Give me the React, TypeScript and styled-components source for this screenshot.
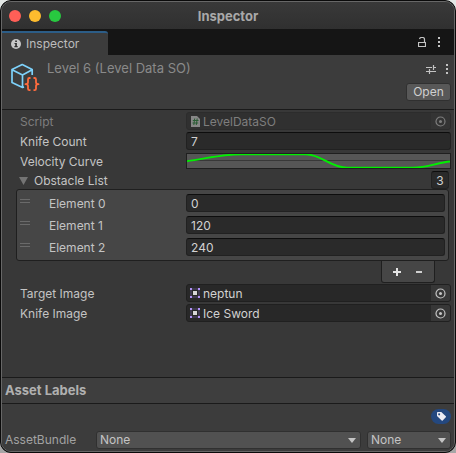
import React, { useId, useState } from "react";
import styled, { createGlobalStyle } from "styled-components";

const GlobalStyle = createGlobalStyle`
  * { box-sizing: border-box; }
  html { background: linear-gradient(#e4e8e6, #a6a6a6); }
  body { margin: 0; }
  body, button, input, select {
    font-family: Inter, "Liberation Sans", sans-serif;
    font-size: 12px;
    line-height: 16px;
    color: #c4c4c4;
  }
  button, input, select { margin: 0; padding: 0; border: 0; background: none; outline: none; }
  svg { display: block; flex: none; }
`;

const Window = styled.main`
  display: flex;
  flex-direction: column;
  min-height: 100vh;
  border: 1px solid #0a0a0a;
  border-radius: 11px;
  background: #0a0a0a;
`;

const Frame = styled.div`
  flex: 1;
  display: flex;
  flex-direction: column;
  border: 1px solid #676767;
  border-radius: 10px;
  background: #383838;
  overflow: hidden;
`;

const TitleBar = styled.header`
  display: grid;
  grid-template-columns: 1fr auto 1fr;
  align-items: center;
  height: 27px;
  padding: 0 7px;
  background: linear-gradient(#393939, #303030);
`;

const Lights = styled.div`
  display: flex;
  gap: 8px;
`;

const Light = styled.button<{ $color: string }>`
  width: 12px;
  height: 12px;
  border-radius: 50%;
  background: ${(p) => p.$color};
`;

const Title = styled.h1`
  margin: 0;
  font-size: 13px;
  font-weight: 700;
  line-height: 16px;
  color: #a9a9a9;
`;

const TabBar = styled.nav`
  display: flex;
  justify-content: space-between;
  align-items: flex-end;
  height: 26px;
  background: #151515;
`;

const Tab = styled.button`
  display: flex;
  align-items: center;
  gap: 5px;
  width: 106px;
  height: 24px;
  padding: 0 9px;
  border-top: 2px solid #2c5d87;
  border-top-right-radius: 3px;
  background: #3c3c3c;
  color: #bdbdbd;
`;

const Tools = styled.div`
  display: flex;
  align-items: center;
  gap: 10px;
`;

const TabTools = styled(Tools)`
  gap: 12px;
  height: 26px;
  padding-right: 14px;
`;

const IconButton = styled.button`
  display: flex;
  color: #c4c4c4;
`;

const AssetHeader = styled.section`
  display: flex;
  align-items: flex-start;
  height: 55px;
  padding: 5px 3px 0 9px;
  border-bottom: 1px solid #1a1a1a;
  background: #3c3c3c;
`;

const AssetTitle = styled.h2`
  flex: 1;
  margin: 0;
  padding-left: 6px;
  font-size: 13px;
  font-weight: 400;
  line-height: 16px;
  color: #8a8a8a;
`;

const HeaderSide = styled.div`
  display: flex;
  flex-direction: column;
  align-items: flex-end;
  gap: 6px;
`;

const HeaderTools = styled(Tools)`
  height: 17px;
  padding-right: 3px;
`;

const OpenButton = styled.button`
  width: 45px;
  height: 18px;
  border: 1px solid #303030;
  border-radius: 3px;
  background: #585858;
  color: #d0d0d0;
`;

const Body = styled.section`
  flex: 1;
  padding: 2px 3px 0 14px;
`;

const Row = styled.div<{ $muted?: boolean }>`
  display: grid;
  grid-template-columns: 166px 1fr;
  align-items: center;
  min-height: 18px;
  margin-bottom: 2px;
  padding-left: 4px;
  color: ${(p) => (p.$muted ? "#7e7e7e" : "#c4c4c4")};
`;

const Label = styled.label`
  padding-top: 2px;
`;

const TextField = styled.input`
  width: 100%;
  height: 18px;
  padding: 0 4px;
  border: 1px solid #212121;
  border-top-color: #0d0d0d;
  border-radius: 3px;
  background: #2a2a2a;
  color: #d2d2d2;
`;

const ObjectBox = styled.div<{ $muted?: boolean }>`
  display: flex;
  align-items: stretch;
  height: 18px;
  border: 1px solid ${(p) => (p.$muted ? "#2c2c2c" : "#202020")};
  border-radius: 3px;
  background: ${(p) => (p.$muted ? "#303030" : "#282828")};
  color: ${(p) => (p.$muted ? "#7e7e7e" : "#d2d2d2")};
  overflow: hidden;
`;

const ObjectValue = styled.div`
  flex: 1;
  display: flex;
  align-items: center;
  gap: 2px;
  padding-left: 3px;
`;

const ObjectName = styled.span`
  padding-top: 2px;
`;

const Picker = styled.button`
  display: flex;
  align-items: center;
  justify-content: center;
  width: 19px;
  background: #373737;
  color: #c4c4c4;

  &:disabled {
    background: #343434;
    color: #7e7e7e;
  }
`;

const CurveBox = styled.button`
  display: block;
  align-self: start;
  height: 16px;
  margin-top: 1px;
  border: 1px solid #1f1f1f;
  background: #565656;
  overflow: hidden;
`;

const ListHeader = styled.div`
  display: flex;
  justify-content: space-between;
  align-items: center;
  height: 18px;
  padding: 0 2px;
  margin-top: -1px;
`;

const Foldout = styled.button`
  display: flex;
  align-items: center;
  gap: 5px;
  padding-top: 1px;
`;

const SizeField = styled(TextField)`
  width: 18px;
  text-align: center;
  padding: 0;
`;

const ListBox = styled.div`
  display: flex;
  flex-direction: column;
  gap: 4px;
  margin-right: 2px;
  padding: 4px 3px;
  border: 1px solid #1f1f1f;
  border-radius: 3px;
  background: #464646;
`;

const ListRow = styled.div`
  display: grid;
  grid-template-columns: 29px 137px 1fr;
  align-items: center;
`;

const Handle = styled.span`
  width: 10px;
  height: 4px;
  margin-bottom: 4px;
  border: solid #6a6a6a;
  border-width: 1px 0;
`;

const ListFooter = styled.div`
  display: flex;
  justify-content: center;
  align-items: center;
  gap: 12px;
  width: 54px;
  height: 22px;
  margin: 0 16px 1px auto;
  border: 1px solid #1f1f1f;
  border-top: 0;
  border-radius: 0 0 3px 3px;
  background: #464646;
`;

const LabelsHeader = styled.h2`
  margin: 0;
  padding: 4px 3px 5px;
  border: solid #1a1a1a;
  border-width: 1px 0;
  background: #3e3e3e;
  font-size: 13px;
  font-weight: 700;
  line-height: 16px;
  color: #b0b0b0;
`;

const LabelsBody = styled.footer`
  display: flex;
  flex-direction: column;
  gap: 7px;
  padding: 5px 3px 2px;
  background: #3c3c3c;
`;

const TagButton = styled.button`
  display: flex;
  align-items: center;
  justify-content: center;
  align-self: flex-end;
  width: 20px;
  height: 15px;
  border-radius: 8px;
  background: #24487f;
`;

const BundleRow = styled.div`
  display: grid;
  grid-template-columns: 85px 1fr 84px;
  align-items: center;
  column-gap: 6px;
  color: #a2a2a2;
`;

const SelectBox = styled.div`
  position: relative;
  color: #c4c4c4;
`;

const Select = styled.select`
  display: block;
  appearance: none;
  width: 100%;
  height: 18px;
  padding: 0 20px 0 3px;
  border: 1px solid #303030;
  border-radius: 3px;
  background: #515151;
`;

const Arrow = styled.svg`
  position: absolute;
  right: 5px;
  top: 7px;
  pointer-events: none;
`;

const InfoIcon = () => (
  <svg width="10" height="10" viewBox="0 0 10 10">
    <circle cx="5" cy="5" r="5" fill="#c8c8c8" />
    <path d="M4.2 1.5h1.7v1.6H4.2zM3.5 4h2.4v3.1h.8v1.1H3.4V7.1h.8v-2h-.7z" fill="#303030" />
  </svg>
);

const LockIcon = () => (
  <svg width="8" height="10" viewBox="0 0 8 10" fill="none" stroke="currentColor">
    <path d="M.5 5.5h7v4h-7zM6.5 5.5V2.5Q6.5.5 4.500.5h-1Q2 .5 1.500 2" strokeWidth="1.200" />
  </svg>
);

const MoreIcon = () => (
  <svg width="2" height="10" viewBox="0 0 2 10" fill="currentColor">
    <path d="M0 0h2v2H0zM0 4h2v2H0zM0 8h2v2H0z" />
  </svg>
);

const PresetIcon = () => (
  <svg width="10" height="10" viewBox="0 0 10 10" fill="none" stroke="currentColor" strokeWidth="1.200">
    <path d="M0 3.500h6M7 3.500h3M7.500 1v5M0 7.500h3M4 7.500h6M3.500 5v5" />
  </svg>
);

const AssetIcon = () => (
  <svg width="30" height="32" viewBox="0 0 30 32" fill="none" strokeWidth="1.700" strokeLinejoin="round">
    <path
      d="M21.200 15V9.500L11.200 4.600 1 9.500v13L11.500 27.500l1.500-.6M1 9.700l10.500 5.300 9.700-5.300M11.500 15v12.500"
      stroke="#7dd1fa"
    />
    <path
      d="M19.500 18H18.400q-1.400 0-1.400 1.500v2.800q0 1.900-2.500 1.900 2.500 0 2.500 1.900v2.600q0 1.500 1.400 1.500h1.100M22.500 18h1.100q1.400 0 1.400 1.500v2.800q0 1.900 2.500 1.900-2.500 0-2.500 1.900v2.600q0 1.500-1.400 1.500h-1.100"
      stroke="#ff6b3d"
      strokeWidth="1.800"
    />
  </svg>
);

const ScriptIcon = () => (
  <svg width="11" height="11" viewBox="0 0 11 11">
    <path d="M1 0h6l3 3v8H1z" fill="#878787" />
    <path d="M4.700 2.500 3.800 9M7.200 2.500l-.9 6.500M2.800 4.500h5.700M2.500 7h5.700" stroke="#2b5c34" fill="none" />
  </svg>
);

const SpriteIcon = () => (
  <svg width="11" height="11" viewBox="0 0 11 11">
    <path d="M1 1h8v8H1z" fill="none" stroke="#544a73" />
    <path d="M0 0h2v2H0zM8 0h2v2H8zM0 8h2v2H0zM8 8h2v2H8z" fill="#b091f5" />
    <path d="M3 3h4v4H3z" fill="#d6d6d6" />
  </svg>
);

const TargetIcon = () => (
  <svg width="11" height="11" viewBox="0 0 11 11">
    <circle cx="5.500" cy="5.500" r="4.500" fill="none" stroke="currentColor" strokeWidth="1.200" />
    <circle cx="5.500" cy="5.500" r="1.500" fill="currentColor" />
  </svg>
);

const PlusIcon = () => (
  <svg width="10" height="10" viewBox="0 0 10 10" stroke="#e4e4e4" strokeWidth="2">
    <path d="M0 5h8M4 1v8" />
  </svg>
);

const MinusIcon = () => (
  <svg width="8" height="10" viewBox="0 0 8 10" stroke="#d0d0d0" strokeWidth="2">
    <path d="M1 5h6" />
  </svg>
);

const TagIcon = () => (
  <svg width="11" height="11" viewBox="0 0 11 11">
    <path
      d="M1.800 1h3.500l4.500 4.300q.5.500 0 1L6.700 9.500q-.5.500-1 0L1 5V1.800Q1 1 1.800 1zM3.100 2.200a1 1 0 1 0 .1 0z"
      fill="#ececf4"
      fillRule="evenodd"
    />
  </svg>
);

const CurveGraph = () => (
  <svg width="100%" height="14" viewBox="0 0 263 14" preserveAspectRatio="none" fill="none">
    <path d="M0 6.500h263" stroke="#383838" />
    <path
      d="M0 7.200C16 5.500 32 .4 54 .3H119C134 .3 144 13.700 160 13.700H226C240 13.700 251 8.500 263 7.500"
      stroke="#00f000"
      strokeWidth="1.800"
    />
  </svg>
);

function ObjectField({ label, name, icon, muted }: { label: string; name: string; icon: React.ReactNode; muted?: boolean }) {
  return (
    <Row $muted={muted}>
      <Label as="span">{label}</Label>
      <ObjectBox $muted={muted}>
        <ObjectValue>
          {icon}
          <ObjectName>{name}</ObjectName>
        </ObjectValue>
        <Picker aria-label={`Select ${label}`} disabled={muted}>
          <TargetIcon />
        </Picker>
      </ObjectBox>
    </Row>
  );
}

function Dropdown({ id, label }: { id?: string; label?: string }) {
  return (
    <SelectBox>
      <Select id={id} aria-label={label}>
        <option>None</option>
      </Select>
      <Arrow width="8" height="5" viewBox="0 0 8 5">
        <path d="M0 0h8L4 5z" fill="#c4c4c4" />
      </Arrow>
    </SelectBox>
  );
}

export default function App() {
  const id = useId();
  const [elements, setElements] = useState(["0", "120", "240"]);

  return (
    <>
      <GlobalStyle />
      <Window>
        <Frame>
          <TitleBar>
            <Lights>
              <Light $color="#ff5f57" aria-label="Close" />
              <Light $color="#febc2e" aria-label="Minimize" />
              <Light $color="#28c840" aria-label="Zoom" />
            </Lights>
            <Title>Inspector</Title>
          </TitleBar>
          <TabBar>
            <Tab>
              <InfoIcon />
              Inspector
            </Tab>
            <TabTools>
              <IconButton aria-label="Lock">
                <LockIcon />
              </IconButton>
              <IconButton aria-label="Tab menu">
                <MoreIcon />
              </IconButton>
            </TabTools>
          </TabBar>
          <AssetHeader>
            <AssetIcon />
            <AssetTitle>Level 6 (Level Data SO)</AssetTitle>
            <HeaderSide>
              <HeaderTools>
                <IconButton aria-label="Presets">
                  <PresetIcon />
                </IconButton>
                <IconButton aria-label="Asset menu">
                  <MoreIcon />
                </IconButton>
              </HeaderTools>
              <OpenButton>Open</OpenButton>
            </HeaderSide>
          </AssetHeader>
          <Body>
            <ObjectField label="Script" name="LevelDataSO" icon={<ScriptIcon />} muted />
            <Row>
              <Label htmlFor={`${id}-knife`}>Knife Count</Label>
              <TextField id={`${id}-knife`} defaultValue="7" />
            </Row>
            <Row>
              <Label as="span">Velocity Curve</Label>
              <CurveBox aria-label="Velocity Curve">
                <CurveGraph />
              </CurveBox>
            </Row>
            <ListHeader>
              <Foldout>
                <svg width="11" height="8" viewBox="0 0 11 8">
                  <path d="M1 0h9L5.500 8z" fill="#747474" />
                </svg>
                Obstacle List
              </Foldout>
              <SizeField aria-label="Obstacle List size" value={elements.length} readOnly />
            </ListHeader>
            <ListBox>
              {elements.map((value, i) => (
                <ListRow key={i}>
                  <Handle />
                  <Label htmlFor={`${id}-e${i}`}>Element {i}</Label>
                  <TextField
                    id={`${id}-e${i}`}
                    value={value}
                    onChange={(e) => setElements(elements.map((v, j) => (j === i ? e.target.value : v)))}
                  />
                </ListRow>
              ))}
            </ListBox>
            <ListFooter>
              <IconButton aria-label="Add element" onClick={() => setElements([...elements, "0"])}>
                <PlusIcon />
              </IconButton>
              <IconButton aria-label="Remove element" onClick={() => setElements(elements.slice(0, -1))}>
                <MinusIcon />
              </IconButton>
            </ListFooter>
            <ObjectField label="Target Image" name="neptun" icon={<SpriteIcon />} />
            <ObjectField label="Knife Image" name="Ice Sword" icon={<SpriteIcon />} />
          </Body>
          <LabelsHeader>Asset Labels</LabelsHeader>
          <LabelsBody>
            <TagButton aria-label="Add label">
              <TagIcon />
            </TagButton>
            <BundleRow>
              <label htmlFor={`${id}-bundle`}>AssetBundle</label>
              <Dropdown id={`${id}-bundle`} />
              <Dropdown label="AssetBundle variant" />
            </BundleRow>
          </LabelsBody>
        </Frame>
      </Window>
    </>
  );
}
